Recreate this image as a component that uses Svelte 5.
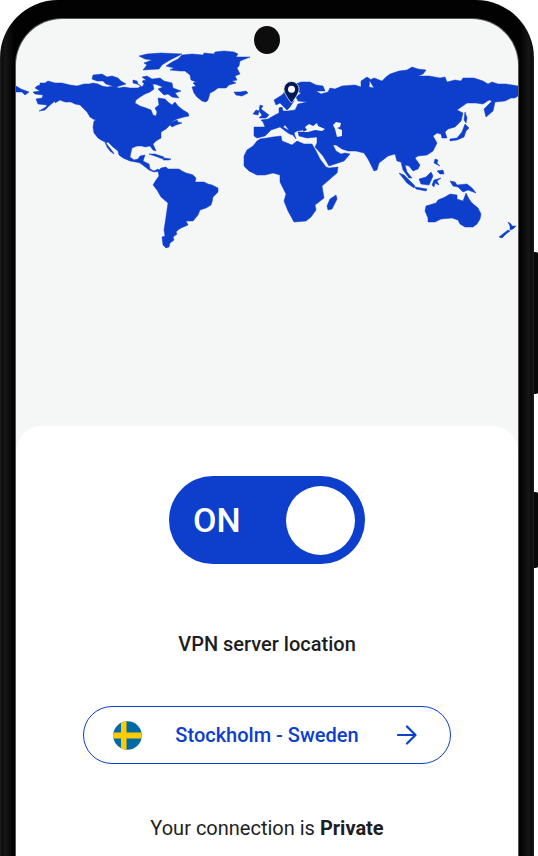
<script>
  let connected = $state(true);
  const city = 'Stockholm';
  const country = 'Sweden';

  const land = [
    // North America
    'M33 92 40 91 35 88 37 86 40 85 40 83 45 83 48 81 55 83 62 83 70 85 77 86 84 84 89 84 93 83 98 84 102 86 107 87 114 86 119 88 124 87 130 88 138 88 141 86 137 84 133 83 133 80 137 81 138 84 142 87 144 84 143 80 147 82 153 85 154 89 150 92 145 94 140 97 136 100 135 103 140 106 146 108 151 110 153 115 156 116 157 112 155 108 159 105 158 98 165 99 168 102 172 105 175 102 178 106 183 110 188 113 189 116 184 117 177 119 169 123 177 120 178 122 182 123 176 125 172 127 170 125 166 129 161 132 161 138 156 141 153 144 156 151 153 150 150 146 145 147 142 146 137 146 132 148 131 152 130 157 134 160 138 159 140 156 145 155 143 161 149 164 150 169 154 171 158 169 160 171 154 172 149 170 144 166 140 163 136 162 130 161 123 158 119 155 118 151 113 147 110 144 108 142 106 143 109 147 113 152 114 154 110 151 107 147 105 142 101 140 98 138 94 133 93 127 94 121 96 120 93 119 90 117 87 112 83 108 80 105 75 104 71 102 65 102 60 100 55 103 55 101 49 106 45 110 39 111 46 107 47 105 38 104 36 99 42 98 43 95 35 94Z',
    'M16 86 21 89 29 92 25 95 22 92 16 92Z',
    'M93 75 102 74 107 77 112 76 118 78 121 81 126 84 116 87 106 84 103 81 97 81 92 79Z',
    'M142 77 147 76 152 79 160 78 164 81 172 83 173 88 181 91 175 93 179 98 172 97 168 94 164 95 158 89 163 87 155 84 149 85 142 82 146 80Z',
    'M139 56 147 54 161 53 182 54 174 58 170 60 165 63 162 65 159 69 143 70 147 65 144 63 152 60 145 59Z',
    // Greenland and Iceland
    'M166 66 172 62 178 59 182 55 192 54 203 55 204 53 214 54 215 52 224 51 234 52 238 54 236 57 250 57 240 61 239 66 237 68 240 74 235 76 237 80 232 81 236 83 229 85 226 88 218 88 214 91 210 93 208 100 206 102 202 101 197 97 194 93 192 87 196 86 193 83 196 82 191 80 190 75 185 71 180 71 170 70 174 68Z',
    'M234 92 240 92 246 91 248 93 242 96 236 95Z',
    // Caribbean
    'M149 154 155 154 164 157 163 159 155 156Z',
    'M164 158 171 159 169 160 163 160Z',
    // South America
    'M158 171 161 168 166 167 168 169 179 169 182 171 186 173 190 174 193 175 196 178 195 182 200 182 204 182 208 184 212 185 218 188 218 192 213 197 212 202 211 205 206 208 200 210 198 215 193 221 186 221 188 225 181 228 178 230 176 232 177 234 173 237 174 240 170 243 169 247 166 248 163 245 162 237 165 236 164 230 166 217 168 203 161 197 157 190 153 185 156 180 159 176Z',
    // Africa
    'M257 141 260 139 267 138 273 137 281 136 282 141 292 145 297 141 304 144 312 144 316 151 320 159 326 167 329 168 338 167 337 173 330 179 322 186 324 198 315 205 316 210 311 217 306 221 294 222 288 211 284 201 286 194 280 182 280 175 273 173 265 175 257 175 249 171 244 166 244 156 247 150 253 146Z',
    'M336 195 337 199 332 209 328 210 327 206 330 199Z',
    // Europe and Asia
    'M254 136 254 127 265 127 263 122 261 120 268 119 275 115 279 113 279 108 282 107 283 111 288 111 295 110 298 104 307 102 298 101 296 97 301 93 297 91 293 96 294 101 290 107 287 110 284 107 280 103 276 105 274 100 282 95 287 89 293 85 301 82 310 82 316 85 323 86 325 91 316 91 321 94 328 92 330 88 335 89 342 86 355 85 361 87 361 81 367 77 370 79 369 87 374 88 371 83 370 80 374 78 382 81 386 77 390 74 399 71 407 70 412 67 418 69 426 70 423 74 418 76 429 76 440 78 445 77 447 82 455 80 461 81 463 78 474 78 483 81 488 84 492 82 498 84 506 84 518 86 518 96 515 98 511 98 505 101 495 102 493 111 486 117 484 109 492 101 489 100 483 104 476 103 467 103 457 110 463 113 461 121 455 127 448 129 445 132 447 138 442 138 441 134 437 133 433 136 437 143 433 151 427 155 418 156 415 158 420 165 418 169 413 171 409 166 405 165 407 172 412 178 409 178 403 170 401 162 397 161 395 154 388 156 379 163 377 170 374 171 368 159 364 153 356 151 348 151 342 149 336 145 333 145 336 151 341 154 345 153 350 154 344 161 329 166 323 156 315 147 317 143 317 137 307 138 299 136 298 132 304 132 303 130 297 131 294 133 296 139 292 134 285 125 283 127 288 130 294 132 292 135 288 133 280 127 271 130 265 136 257 138Z',
    'M260 105 263 106 261 109 265 112 269 115 266 118 259 118 262 115 259 111Z',
    'M253 114 256 110 259 111 258 115Z',
    'M369 80 374 84 379 83 375 80Z',
    // Japan, Philippines and Indonesia
    'M465 112 467 118 466 123 464 120Z',
    'M465 124 469 128 466 131 464 137 457 140 450 141 450 139 457 138 462 132Z',
    'M435 159 438 160 437 163 440 166 434 163Z',
    'M437 171 443 170 444 174 440 174Z',
    'M399 173 404 175 415 186 414 188 407 183Z',
    'M415 187 427 189 426 191 416 189Z',
    'M419 179 426 177 431 172 433 176 429 185 421 184Z',
    'M434 180 441 178 437 181 439 185 435 183 434 187 432 185Z',
    // Australia and its neighbours
    'M450 181 455 182 457 185 467 184 472 188 476 193 468 190 463 192 458 187 453 186Z',
    'M426 206 436 203 438 200 445 197 450 194 457 195 457 199 463 201 466 193 469 199 472 203 478 208 481 214 480 219 477 224 473 227 465 227 460 224 458 220 452 218 441 219 435 222 428 222 428 218 425 211Z',
    'M508 222 511 224 512 226 516 226 513 229 510 230 510 226Z',
    'M508 230 510 231 506 234 502 238 499 237Z',
  ];

  const seas = [
    'M303 132 307 130 305 127 309 124 313 126 317 123 318 126 325 129 322 131 315 130 308 132Z',
    'M333 125 336 122 341 123 340 127 337 128 342 130 342 136 337 137 336 133 335 129Z',
  ];
</script>

<div class="phone">
  <span class="side-key volume"></span>
  <span class="side-key power"></span>

  <main class="screen">
    <span class="camera"></span>

    <svg class="map" viewBox="16 20 502 230" role="img" aria-label="World map">
      {#each land as d}
        <path class="land" {d} />
      {/each}
      {#each seas as d}
        <path class="sea" {d} />
      {/each}
      <path
        class="pin"
        d="M291.500 81.500a7.600 7.600 0 0 0-7.600 7.600c0 5.200 7.600 13.900 7.600 13.900s7.600-8.700 7.600-13.900a7.600 7.600 0 0 0-7.600-7.600z"
      />
      <circle class="pin-dot" cx="291.500" cy="89.300" r="3.500" />
    </svg>

    <section class="panel">
      <label class="switch">
        <input type="checkbox" role="switch" aria-label="VPN" bind:checked={connected} />
        <span class="state">{connected ? 'ON' : 'OFF'}</span>
        <span class="knob"></span>
      </label>

      <h1>VPN server location</h1>

      <button class="location" type="button">
        <svg class="flag" viewBox="0 0 29 29">
          <clipPath id="round"><circle cx="14.500" cy="14.500" r="14.300" /></clipPath>
          <g clip-path="url(#round)">
            <path fill="#006aa7" d="M0 0h29v29H0z" />
            <path fill="#fecc00" d="M8 0h5.500v29H8zM0 11.500h29v6H0z" />
          </g>
        </svg>
        <span>{city} - {country}</span>
        <svg class="arrow" viewBox="0 0 20 20">
          <path d="M1 10h17M10 1.500l8.500 8.500-8.500 8.500" />
        </svg>
      </button>

      <p>Your connection is <strong>{connected ? 'Private' : 'Public'}</strong></p>
    </section>
  </main>
</div>

<style>
  :global(body) {
    margin: 0;
    background: #fff;
  }

  .phone {
    position: relative;
    display: flex;
    box-sizing: border-box;
    min-height: 100vh;
    margin-right: 4px;
    padding: 19px 16px 0;
    border-radius: 58px 58px 0 0;
    background: linear-gradient(90deg, #222 0, #0b0b0b 2px, #161616 5px, #020202 14px, #020202 calc(100% - 14px), #161616 calc(100% - 5px), #0b0b0b calc(100% - 2px), #222 100%);
    font-family: Roboto, sans-serif;
    color: #1d1e22;
  }

  .side-key {
    position: absolute;
    left: 100%;
    width: 5px;
    border-radius: 0 4px 4px 0;
    background: #090909;
  }

  .volume {
    top: 252px;
    height: 142px;
  }

  .power {
    top: 492px;
    height: 76px;
  }

  .screen {
    position: relative;
    display: flex;
    flex: 1;
    flex-direction: column;
    border-radius: 46px 46px 0 0;
    background: #f5f7f7;
    box-shadow: 0 0 0 1px #555;
    overflow: hidden;
  }

  .camera {
    position: absolute;
    top: 7px;
    left: 50%;
    width: 26px;
    height: 28px;
    border-radius: 50%;
    background: #0d0d0d;
    transform: translateX(-50%);
  }

  .map {
    display: block;
    width: 100%;
    margin: 1px 0 176px;
  }

  .land {
    fill: #0d3ecc;
    stroke: #0d3ecc;
    stroke-width: 0.5;
    stroke-linejoin: round;
  }

  .sea {
    fill: #f5f7f7;
  }

  .pin {
    fill: #001a57;
    stroke: #f5f7f7;
    stroke-width: 0.7;
  }

  .pin-dot {
    fill: #fff;
  }

  .panel {
    display: flex;
    flex: 1;
    flex-direction: column;
    align-items: center;
    padding: 50px 67px 16px;
    border-radius: 26px 26px 0 0;
    background: #fff;
    font-size: 20px;
    line-height: 24px;
  }

  .switch {
    display: flex;
    align-items: center;
    justify-content: space-between;
    box-sizing: border-box;
    width: 196px;
    height: 88px;
    padding: 0 10px 0 24px;
    border-radius: 44px;
    background: #0d3ecc;
    color: #fff;
    cursor: pointer;
  }

  .switch input {
    position: absolute;
    opacity: 0;
  }

  .switch:has(input:focus-visible) {
    outline: 3px solid #8aa5f2;
  }

  .state {
    font-size: 34px;
    font-weight: 500;
    line-height: 40px;
  }

  .knob {
    width: 69px;
    height: 69px;
    border-radius: 50%;
    background: #fff;
  }

  h1 {
    margin: 68px 0 50px;
    font-size: 20px;
    font-weight: 500;
  }

  .location {
    display: grid;
    grid-template-columns: 1fr auto 1fr;
    align-items: center;
    width: 100%;
    height: 58px;
    padding: 0 29px;
    border: 1px solid #0d3ecc;
    border-radius: 29px;
    background: #fff;
    color: #0d3ecc;
    font: inherit;
    font-weight: 500;
    cursor: pointer;
  }

  .flag {
    width: 29px;
    height: 29px;
  }

  .arrow {
    justify-self: end;
    width: 20px;
    height: 20px;
    margin-right: 4px;
    fill: none;
    stroke: #0d3ecc;
    stroke-width: 2.2;
    stroke-linecap: round;
    stroke-linejoin: round;
  }

  p {
    margin: 52px 0 0;
  }
</style>
